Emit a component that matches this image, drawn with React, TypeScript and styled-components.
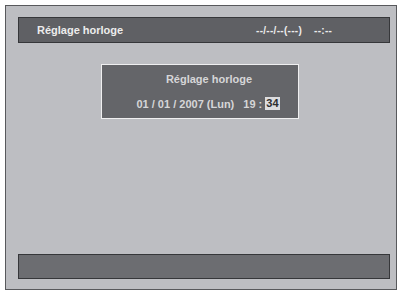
import React from "react";
import styled, { createGlobalStyle } from "styled-components";

const Global = createGlobalStyle`
  html, body { margin: 0; padding: 0; background: #ffffff; }
  body { font-family: "Liberation Sans", Arial, sans-serif; }
`;

const Frame = styled.div`
  box-sizing: border-box;
  margin: 5px 0 0 5px;
  width: 392px;
  height: 285px;
  border: 1px solid #58595c;
  background: #bdbec2;
  padding: 11px 6px 10px 12px;
  display: flex;
  flex-direction: column;
`;

const Bar = styled.div<{ $h: number; $bg: string }>`
  box-sizing: border-box;
  height: ${(p) => p.$h}px;
  background: ${(p) => p.$bg};
  border: 1px solid #36373a;
  display: flex;
  align-items: center;
  padding-left: 18px;
  color: #ececec;
  font-weight: bold;
  font-size: 11px;
`;

const Title = styled.span`
  width: 219px;
`;

const Clock = styled.span`
  display: flex;
  gap: 12px;
  font-size: 10px;
  letter-spacing: 0.3px;
`;

const Content = styled.div`
  flex: 1;
  padding-top: 21px;
`;

const Dialog = styled.div`
  box-sizing: border-box;
  margin-left: 83px;
  width: 198px;
  height: 55px;
  border: 1.5px solid #efeff0;
  background: #646569;
  display: flex;
  flex-direction: column;
  align-items: center;
  padding-top: 8px;
  gap: 12px;
  color: #d6d6d8;
  font-weight: bold;
  font-size: 11px;
`;

const DialogTitle = styled.span`
  margin-left: 18px;
`;

const DateRow = styled.div`
  display: flex;
  align-items: center;
  margin-left: 16px;
`;

const Spacer = styled.span<{ $w: number }>`
  display: inline-block;
  width: ${(p) => p.$w}px;
`;

const Selected = styled.span`
  background: #dcdcde;
  color: #2e2e30;
  padding: 0 1px;
  height: 13px;
  line-height: 13px;
  margin-left: 3px;
`;

export default function App() {
  return (
    <>
      <Global />
      <Frame>
        <Bar $h={26} $bg="#5f6064">
          <Title>Réglage horloge</Title>
          <Clock>
            <span>--/--/--(---)</span>
            <span>--:--</span>
          </Clock>
        </Bar>
        <Content>
          <Dialog>
            <DialogTitle>Réglage horloge</DialogTitle>
            <DateRow>
              <span>01 / 01 / 2007 (Lun)</span>
              <Spacer $w={9} />
              <span>19 :</span>
              <Selected>34</Selected>
            </DateRow>
          </Dialog>
        </Content>
        <Bar $h={25} $bg="#6c6d71" />
      </Frame>
    </>
  );
}
